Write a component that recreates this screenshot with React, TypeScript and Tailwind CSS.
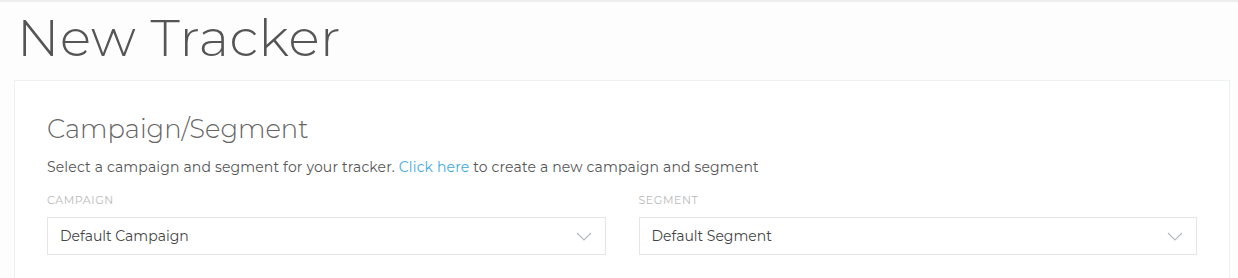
import React from "react";

function Chevron() {
  return (
    <svg width="16" height="9" viewBox="0 0 16 9" fill="none" className="shrink-0">
      <path d="M1 1l7 7 7-7" stroke="#b5b9bd" strokeWidth="1.1" />
    </svg>
  );
}

function Select({ label, value }: { label: string; value: string }) {
  return (
    <div className="flex-1 flex flex-col">
      <div className="text-[11px] tracking-[0.6px] text-[#b9b9b9] leading-[14px] mb-[10px]">{label}</div>
      <div className="h-[38px] border border-[#e3e5e6] bg-white flex items-center justify-between pl-[12px] pr-[13px]">
        <span className="text-[14px] text-[#444]">{value}</span>
        <Chevron />
      </div>
    </div>
  );
}

export default function App() {
  return (
    <div
      className="w-[1238px] h-[278px] overflow-hidden bg-[#fdfdfd] border-t-2 border-[#eeeeee]"
      style={{ fontFamily: "Montserrat, 'Open Sans', Lato, sans-serif" }}
    >
      <div className="pl-[17px] pt-[5px] h-[78px]">
        <h1 className="text-[52px] font-light text-[#555] leading-[62px] tracking-[0.6px]">New Tracker</h1>
      </div>
      <div className="ml-[14px] mr-[8px] border border-[#eef1f1] bg-white px-[32px] pt-[30px] pb-[40px]">
        <h2 className="text-[25.8px] font-light text-[#666] leading-[36px]">Campaign/Segment</h2>
        <p className="mt-[11px] text-[14px] text-[#555] leading-[18px] tracking-[0.15px]">
          Select a campaign and segment for your tracker.{" "}
          <span className="text-[#3fa9dd]">Click here</span> to create a new campaign and segment
        </p>
        <div className="mt-[17px] flex gap-[33px]">
          <Select label="CAMPAIGN" value="Default Campaign" />
          <Select label="SEGMENT" value="Default Segment" />
        </div>
      </div>
    </div>
  );
}
